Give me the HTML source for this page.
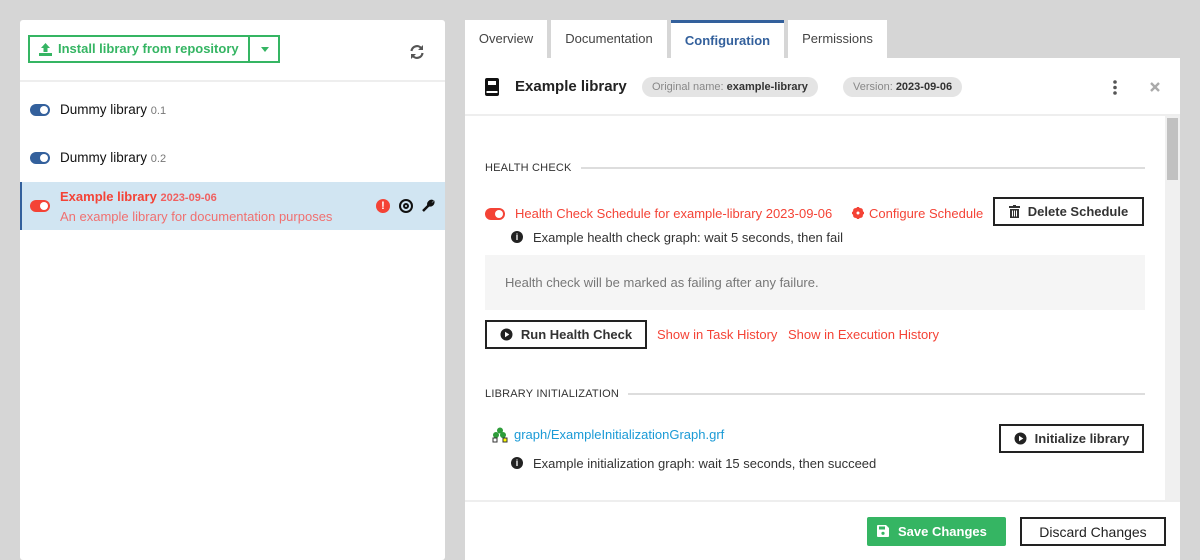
<!DOCTYPE html>
<html><head><style>
*{box-sizing:border-box;margin:0;padding:0}
body{width:1200px;height:560px;background:#d6d6d6;font-family:"Liberation Sans",sans-serif;position:relative;overflow:hidden;font-size:13px;color:#222}
.a{position:absolute}
.tog{position:absolute;width:20px;height:12px;border-radius:6px}
.tog::after{content:"";position:absolute;right:2px;top:2px;width:8px;height:8px;border-radius:50%;background:#fff}
.blue{background:#33609c}.red{background:#f44336}
.btn{position:absolute;border:2px solid #222;background:#fff;font-weight:bold;font-size:13px;color:#333;display:flex;align-items:center;justify-content:center;gap:8px}
.pill{position:absolute;background:#e4e4e4;border-radius:10px;height:20px;font-size:11px;color:#888;line-height:20px;padding:0 10px}
.pill b{color:#333}
.sec{position:absolute;font-size:11px;color:#333;letter-spacing:.2px}
.line{position:absolute;height:2px;background:#ddd}
.tab{position:absolute;top:20px;height:38px;background:#fff;font-size:13px;color:#444;text-align:center;line-height:38px}
</style></head><body>
<div class="a" style="left:20px;top:20px;width:425px;height:540px;background:#fff;border-radius:3px"></div>
<div class="a" style="left:20px;top:80px;width:425px;height:2px;background:#eee"></div>
<div class="a" style="left:28px;top:35px;width:252px;height:28px;border:2px solid #35b563;color:#35b563;font-weight:bold;font-size:13px;line-height:24px">
 <svg class="a" style="left:9px;top:6px" width="13" height="13" viewBox="0 0 13 13"><path d="M6.5 0L11 5H8.5V9H4.5V5H2Z M0 10H13V13H0Z" fill="#35b563"/></svg>
 <span class="a" style="left:28px;top:0">Install library from repository</span>
 <div class="a" style="left:218px;top:-2px;width:2px;height:28px;background:#35b563"></div>
 <div class="a" style="left:231px;top:10px;border:4px solid transparent;border-top:5px solid #35b563"></div>
</div>
<svg class="a" style="left:409px;top:44px" width="16" height="16" viewBox="0 0 16 16"><path d="M2.5 7A5.5 5.5 0 0 1 12.5 4.5M13.5 9A5.5 5.5 0 0 1 3.5 11.5" stroke="#555" stroke-width="2.2" fill="none"/><path d="M14 1V6H9Z M2 15V10H7Z" fill="#555"/></svg>
<div class="tog blue" style="left:30px;top:104px"></div>
<div class="a" style="left:60px;top:102px;font-size:13.5px;color:#111">Dummy library <span style="font-size:11px;color:#777">0.1</span></div>
<div class="tog blue" style="left:30px;top:152px"></div>
<div class="a" style="left:60px;top:150px;font-size:13.5px;color:#111">Dummy library <span style="font-size:11px;color:#777">0.2</span></div>
<div class="a" style="left:20px;top:182px;width:425px;height:48px;background:#d1e5f2;border-left:2px solid #33609c"></div>
<div class="tog red" style="left:30px;top:200px"></div>
<div class="a" style="left:60px;top:189px;font-size:13px;color:#f44336;font-weight:bold">Example library <span style="font-size:11px;color:#f06060">2023-09-06</span></div>
<div class="a" style="left:60px;top:209px;font-size:13px;color:#f07070">An example library for documentation purposes</div>
<div class="a" style="left:376px;top:199px;width:14px;height:14px;border-radius:50%;background:#f44336;color:#fff;font-size:11px;font-weight:bold;text-align:center;line-height:14px">!</div>
<div class="a" style="left:399px;top:199px;width:14px;height:14px;border-radius:50%;border:2px solid #111"><div class="a" style="left:2px;top:2px;width:6px;height:6px;border-radius:50%;border:2px solid #111"></div></div>
<svg class="a" style="left:422px;top:198px" width="14" height="14" viewBox="0 0 14 14"><path d="M1 13L7 7" stroke="#111" stroke-width="2.5"/><path d="M6 8A4 4 0 0 1 11 2.5L9 4.5 10 5.5 12 3.5A4 4 0 0 1 7 8Z" fill="#111" stroke="#111"/></svg>
<div class="tab" style="left:465px;width:82px">Overview</div>
<div class="tab" style="left:551px;width:116px">Documentation</div>
<div class="tab" style="left:671px;width:113px;border-top:3px solid #33609c;line-height:35px;color:#33609c;font-weight:bold">Configuration</div>
<div class="tab" style="left:788px;width:99px">Permissions</div>
<div class="a" style="left:465px;top:58px;width:715px;height:502px;background:#fff"></div>
<div class="a" style="left:465px;top:114px;width:715px;height:2px;background:#eee"></div>
<svg class="a" style="left:485px;top:78px" width="14" height="18" viewBox="0 0 14 18"><rect x="0" y="0" width="14" height="18" rx="2" fill="#111"/><rect x="3" y="3" width="8" height="4" fill="#fff"/><rect x="1.5" y="13" width="11" height="2" fill="#fff"/></svg>
<div class="a" style="left:515px;top:78px;font-size:15px;font-weight:bold;color:#222">Example library</div>
<div class="pill" style="left:642px;top:77px">Original name: <b>example-library</b></div>
<div class="pill" style="left:843px;top:77px">Version: <b>2023-09-06</b></div>
<svg class="a" style="left:1112px;top:80px" width="6" height="15"><circle cx="3" cy="2" r="1.8" fill="#555"/><circle cx="3" cy="7.5" r="1.8" fill="#555"/><circle cx="3" cy="13" r="1.8" fill="#555"/></svg>
<svg class="a" style="left:1150px;top:82px" width="10" height="10"><path d="M1 1L9 9M9 1L1 9" stroke="#aaa" stroke-width="2.4"/></svg>
<div class="a" style="left:1165px;top:116px;width:15px;height:385px;background:#f0f0f0"></div>
<div class="a" style="left:1167px;top:118px;width:11px;height:62px;background:#c1c1c1"></div>
<div class="sec" style="left:485px;top:162px">HEALTH CHECK</div>
<div class="line" style="left:581px;top:167px;width:564px"></div>
<div class="tog red" style="left:485px;top:208px"></div>
<div class="a" style="left:515px;top:206px;color:#f44336">Health Check Schedule for example-library 2023-09-06</div>
<svg class="a" style="left:852px;top:207px" width="12" height="12" viewBox="0 0 12 12"><circle cx="6" cy="6" r="4" fill="none" stroke="#f44336" stroke-width="3"/><path d="M6 0V12M0 6H12M1.8 1.8L10.2 10.2M10.2 1.8L1.8 10.2" stroke="#f44336" stroke-width="2"/><circle cx="6" cy="6" r="1.5" fill="#fff"/></svg>
<div class="a" style="left:869px;top:206px;color:#f44336">Configure Schedule</div>
<div class="btn" style="left:993px;top:197px;width:151px;height:29px"><svg width="11" height="13" viewBox="0 0 11 13"><rect x="0" y="1" width="11" height="2" fill="#333"/><rect x="4" y="0" width="3" height="2" fill="#333"/><path d="M1 4H10V13H1Z" fill="#333"/><path d="M3.5 5.5V11.5M5.5 5.5V11.5M7.5 5.5V11.5" stroke="#fff"/></svg>Delete Schedule</div>
<div class="a" style="left:511px;top:231px;width:12px;height:12px;border-radius:50%;background:#222;color:#fff;font-size:9px;font-weight:bold;text-align:center;line-height:12px">i</div>
<div class="a" style="left:533px;top:230px;font-size:13px;color:#333">Example health check graph: wait 5 seconds, then fail</div>
<div class="a" style="left:485px;top:255px;width:660px;height:55px;background:#f5f5f5"></div>
<div class="a" style="left:505px;top:275px;font-size:13px;color:#777">Health check will be marked as failing after any failure.</div>
<div class="btn" style="left:485px;top:320px;width:162px;height:29px"><svg width="13" height="13"><circle cx="6.5" cy="6.5" r="6" fill="#222"/><path d="M5 3.8L9.3 6.5 5 9.2Z" fill="#fff"/></svg>Run Health Check</div>
<div class="a" style="left:657px;top:327px;color:#f44336">Show in Task History</div>
<div class="a" style="left:788px;top:327px;color:#f44336">Show in Execution History</div>
<div class="sec" style="left:485px;top:388px">LIBRARY INITIALIZATION</div>
<div class="line" style="left:628px;top:393px;width:517px"></div>
<svg class="a" style="left:492px;top:427px" width="17" height="16" viewBox="0 0 17 16"><circle cx="8" cy="3.5" r="3" fill="#2e9c3a"/><circle cx="4" cy="8" r="3" fill="#2e9c3a"/><circle cx="11" cy="8" r="3" fill="#2e9c3a"/><rect x="1" y="11" width="4" height="4" fill="#fff" stroke="#333"/><rect x="11" y="11" width="4" height="4" fill="#ff0" stroke="#333"/></svg>
<div class="a" style="left:514px;top:427px;font-size:13px;color:#1a9ad6">graph/ExampleInitializationGraph.grf</div>
<div class="btn" style="left:999px;top:424px;width:145px;height:29px"><svg width="13" height="13"><circle cx="6.5" cy="6.5" r="6" fill="#222"/><path d="M5 3.8L9.3 6.5 5 9.2Z" fill="#fff"/></svg>Initialize library</div>
<div class="a" style="left:511px;top:457px;width:12px;height:12px;border-radius:50%;background:#222;color:#fff;font-size:9px;font-weight:bold;text-align:center;line-height:12px">i</div>
<div class="a" style="left:533px;top:456px;font-size:13px;color:#333">Example initialization graph: wait 15 seconds, then succeed</div>
<div class="a" style="left:465px;top:500px;width:715px;height:2px;background:#eee"></div>
<div class="a" style="left:867px;top:517px;width:139px;height:29px;background:#35b563;border-radius:2px;color:#fff;font-weight:bold;font-size:13px;line-height:29px;padding-left:31px">Save Changes</div>
<svg class="a" style="left:877px;top:525px" width="12" height="12" viewBox="0 0 12 12"><path d="M0 1Q0 0 1 0H9L12 3V11Q12 12 11 12H1Q0 12 0 11Z" fill="#fff"/><rect x="2" y="1.5" width="6" height="3" fill="#35b563"/><circle cx="6" cy="8.3" r="1.6" fill="#35b563"/></svg>
<div class="btn" style="left:1020px;top:517px;width:146px;height:29px;font-weight:normal;color:#222;font-size:14px">Discard Changes</div>
</body></html>
